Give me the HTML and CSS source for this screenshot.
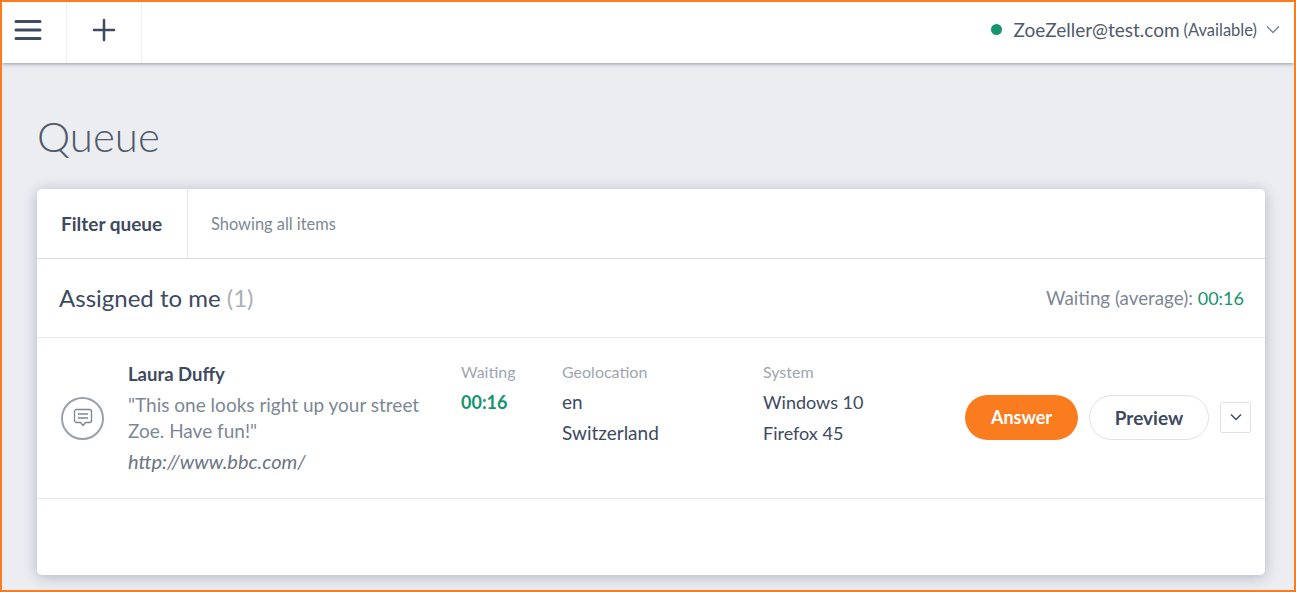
FILE: index.html
```html
<!DOCTYPE html>
<html lang="en">
<head>
    <meta charset="UTF-8">
    <meta name="viewport" content="width=device-width, initial-scale=1.0">
    <title>Queue</title>
    <link rel="stylesheet" href="styles.css">
</head>
<body>
    <header class="topbar">
        <button class="bar-btn bar-btn-menu" aria-label="Menu">
            <svg width="28" height="22" viewBox="0 0 28 22"><path d="M2 2.5h24M2 11h24M2 19.500h24" fill="none" stroke="#3d4a5f" stroke-width="3" stroke-linecap="round"/></svg>
        </button>
        <button class="bar-btn bar-btn-add" aria-label="Add">
            <svg width="24" height="24" viewBox="0 0 24 24"><path d="M12 2v20M2 12h20" fill="none" stroke="#3d4a5f" stroke-width="2.500" stroke-linecap="round"/></svg>
        </button>
        <div class="user">
            <span class="user-dot"></span>
            <span class="user-name">ZoeZeller@test.com</span>
            <span class="user-status">(Available)</span>
            <svg class="user-caret" width="14" height="9" viewBox="0 0 14 9"><path d="M1 1.500l6 6 6-6" fill="none" stroke="#7d8794" stroke-width="1.500"/></svg>
        </div>
    </header>

    <main class="content">
        <h1>Queue</h1>
        <section class="card">
            <div class="filter">
                <div class="filter-label">Filter queue</div>
                <div class="filter-value">Showing all items</div>
            </div>
            <div class="group">
                <h2>Assigned to me <span class="count">(1)</span></h2>
                <div class="average">Waiting (average): <span class="time time-avg">00:16</span></div>
            </div>
            <div class="item">
                <div class="item-icon">
                    <svg width="20" height="20" viewBox="0 0 20 20"><path d="M3.500 1.500h13a2 2 0 0 1 2 2v9a2 2 0 0 1-2 2h-4l-2.500 3-2.500-3h-4a2 2 0 0 1-2-2v-9a2 2 0 0 1 2-2zM5 6h10M5 10h10" fill="none" stroke="#7d8794" stroke-width="1.300"/></svg>
                </div>
                <div class="item-main">
                    <div class="item-name">Laura Duffy</div>
                    <div class="item-quote">"This one looks right up your street Zoe. Have fun!"</div>
                    <div class="item-url">http://www.bbc.com/</div>
                </div>
                <div class="col col-wait">
                    <div class="col-label">Waiting</div>
                    <div class="time time-bold">00:16</div>
                </div>
                <div class="col col-geo">
                    <div class="col-label">Geolocation</div>
                    <div>en</div>
                    <div>Switzerland</div>
                </div>
                <div class="col col-sys">
                    <div class="col-label">System</div>
                    <div>Windows 10</div>
                    <div>Firefox 45</div>
                </div>
                <div class="actions">
                    <button class="btn btn-answer">Answer</button>
                    <button class="btn btn-preview">Preview</button>
                    <button class="btn-more" aria-label="More">
                        <svg width="12" height="8" viewBox="0 0 12 8"><path d="M1 1.500l5 5 5-5" fill="none" stroke="#3d4a5f" stroke-width="1.500"/></svg>
                    </button>
                </div>
            </div>
        </section>
    </main>
</body>
</html>
```

FILE: styles.css
```css
* {
    box-sizing: border-box;
}
body {
    font-family: Lato, "Noto Sans", sans-serif;
    background-color: #ebedf1;
    color: #3d4a5f;
    margin: 0;
    height: 592px;
    overflow: hidden;
    border: 2px solid #fb7b1f;
}
button {
    font-family: inherit;
    cursor: pointer;
}
.topbar {
    display: flex;
    align-items: stretch;
    height: 61px;
    background: #fff;
    box-shadow: 0 1px 4px rgba(40, 50, 70, 0.45);
}
.bar-btn {
    display: flex;
    align-items: center;
    justify-content: center;
    padding: 0;
    background: none;
    border: none;
    border-right: 1px solid #eeeff1;
}
.bar-btn-menu {
    width: 65px;
    padding-right: 12px;
    padding-bottom: 5px;
}
.bar-btn-add {
    width: 75px;
    padding-bottom: 5px;
}
.user {
    display: flex;
    align-items: center;
    margin-left: auto;
    padding: 0 14px 6px 0;
    font-size: 19px;
    color: #4f5a6b;
}
.user-dot {
    width: 11px;
    height: 11px;
    border-radius: 50%;
    background: #16936f;
    margin-right: 12px;
}
.user-status {
    font-size: 16.500px;
    margin-left: 4px;
}
.user-caret {
    margin-left: 9px;
}
.content {
    padding: 0 29px 0 35px;
}
h1 {
    font-size: 42px;
    font-weight: 300;
    line-height: 50px;
    margin: 0;
    padding: 48px 0 28px;
    color: #4f5a6b;
}
.card {
    height: 386px;
    background: #fff;
    border-radius: 5px;
    box-shadow: 0 2px 14px rgba(40, 50, 70, 0.3);
}
.filter {
    display: flex;
    align-items: stretch;
    height: 70px;
    border-bottom: 1px solid #d9dce1;
}
.filter-label {
    display: flex;
    align-items: center;
    width: 151px;
    padding-left: 24px;
    font-size: 19px;
    font-weight: 700;
    border-right: 1px solid #e6e8ec;
}
.filter-value {
    display: flex;
    align-items: center;
    padding-left: 23px;
    font-size: 16.400px;
    color: #7d8794;
}
.group {
    display: flex;
    align-items: center;
    justify-content: space-between;
    height: 79px;
    padding: 0 21px 1px 22px;
    border-bottom: 1px solid #e6e8ec;
}
h2 {
    font-size: 24px;
    font-weight: 400;
    margin: 0;
}
.count {
    color: #a9afb8;
}
.average {
    font-size: 18.800px;
    color: #7d8794;
}
.time {
    color: #16936f;
}
.time-avg {
    font-size: 18px;
}
.time-bold {
    font-weight: 700;
}
.item {
    display: flex;
    align-items: center;
    height: 161px;
    border-bottom: 1px solid #e6e8ec;
    font-size: 18px;
    line-height: 31px;
}
.item-icon {
    display: flex;
    align-items: center;
    justify-content: center;
    flex: none;
    width: 43px;
    height: 43px;
    margin-left: 24px;
    border: 2.500px solid #9aa1ab;
    border-radius: 50%;
}
.item-main {
    align-self: flex-start;
    width: 333px;
    margin-left: 24px;
    padding-top: 21px;
}
.item-name {
    font-size: 18.500px;
    font-weight: 700;
    line-height: 30px;
}
.item-quote {
    width: 305px;
    margin-top: 3px;
    font-size: 19px;
    line-height: 26px;
    color: #7d8794;
}
.item-url {
    font-size: 20px;
    font-style: italic;
    line-height: 34px;
    color: #6c7583;
}
.col {
    align-self: flex-start;
    padding-top: 18px;
}
.col-label {
    font-size: 16px;
    color: #a0a6af;
    line-height: 32px;
    margin-bottom: -2px;
}
.col-wait .col-label,
.col-sys .col-label {
    margin-bottom: -1px;
}
.col-wait {
    width: 101px;
}
.col-geo {
    width: 201px;
    font-size: 19px;
}
.col-sys {
    width: 202px;
}
.actions {
    display: flex;
    align-items: center;
    padding-bottom: 2px;
}
.btn {
    height: 45px;
    border-radius: 23px;
    font-size: 18px;
    font-weight: 700;
}
.btn-answer {
    width: 113px;
    border: none;
    background: #fb7b1f;
    color: #fff;
}
.btn-preview {
    width: 120px;
    margin-left: 11px;
    border: 1px solid #dfe2e7;
    background: #fff;
    color: #3d4a5f;
    font-size: 19px;
}
.btn-more {
    display: flex;
    align-items: center;
    justify-content: center;
    width: 31px;
    height: 31px;
    margin-left: 11px;
    padding: 0;
    border: 1px solid #dfe2e7;
    border-radius: 2px;
    background: #fff;
}
```
